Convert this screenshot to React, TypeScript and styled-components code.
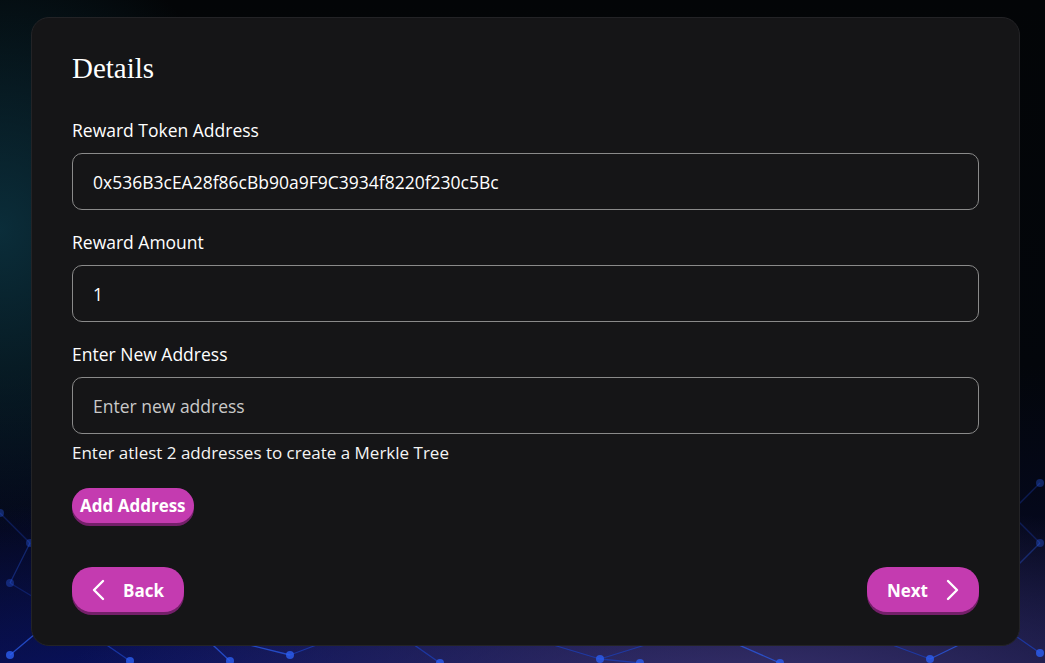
import React, { useState } from 'react';
import styled, { createGlobalStyle } from 'styled-components';

const GlobalStyle = createGlobalStyle`
  html, body {
    margin: 0;
    padding: 0;
    height: 100%;
  }
  body {
    font-family: "Open Sans", "Noto Sans", sans-serif;
    background: #020306;
    overflow: hidden;
  }
  #root {
    height: 100%;
  }
`;

const Page = styled.div`
  position: relative;
  height: 100vh;
  box-sizing: border-box;
  padding: 17px 25px 17px 31px;
  background:
    radial-gradient(ellipse 260px 300px at 0px 230px, rgba(12, 52, 66, 0.85), rgba(12, 52, 66, 0) 100%),
    radial-gradient(ellipse 700px 200px at 760px 700px, rgba(70, 60, 130, 0.8), rgba(70, 60, 130, 0) 100%),
    radial-gradient(ellipse 600px 220px at 150px 720px, rgba(10, 20, 110, 0.9), rgba(10, 20, 110, 0) 100%),
    linear-gradient(180deg, #030507 0%, #03060b 55%, #060a2a 100%);
  overflow: hidden;
`;

const Network = styled.svg`
  position: absolute;
  left: 0;
  bottom: 0;
  width: 100%;
  height: 300px;
  pointer-events: none;
`;

const Card = styled.div`
  position: relative;
  height: 100%;
  box-sizing: border-box;
  background: #151517;
  border: 1px solid #232326;
  border-radius: 18px;
  padding: 32px 40px 30px 40px;
  display: flex;
  flex-direction: column;
  color: #fff;
`;

const Title = styled.h2`
  margin: 0 0 32px 0;
  font-family: "Liberation Serif", "DejaVu Serif", serif;
  font-weight: 400;
  font-size: 29px;
  line-height: 36px;
  color: #fff;
`;

const Fields = styled.div`
  display: flex;
  flex-direction: column;
  gap: 20px;
`;

const Field = styled.div`
  display: flex;
  flex-direction: column;
`;

const Label = styled.label`
  font-size: 17.5px;
  line-height: 24px;
  margin-bottom: 11px;
  color: #fff;
`;

const Input = styled.input`
  height: 57px;
  box-sizing: border-box;
  background: transparent;
  border: 1px solid #8a8a8a;
  border-radius: 10px;
  padding: 0 20px;
  font-family: "Open Sans", "Noto Sans", sans-serif;
  font-size: 17.5px;
  color: #fff;
  outline: none;
  &::placeholder {
    color: #c9c9c9;
  }
`;

const Hint = styled.p`
  margin: 7px 0 23px 0;
  font-size: 17px;
  line-height: 24px;
  font-weight: 400;
  color: #f4f4f4;
`;

const PillButton = styled.button<{ $size?: 'small' | 'large' }>`
  display: inline-flex;
  align-items: center;
  gap: ${(p) => (p.$size === 'large' ? '18px' : '0')};
  box-sizing: border-box;
  height: ${(p) => (p.$size === 'large' ? '45px' : '35px')};
  padding: ${(p) => (p.$size === 'large' ? '1px 20px 0' : '0 8px')};
  border: none;
  border-radius: ${(p) => (p.$size === 'large' ? '20px' : '18px')};
  background: #c43bb0;
  box-shadow: 0 3px 0 #74206a;
  color: #fff;
  font-family: "Open Sans", "Noto Sans", sans-serif;
  font-weight: 700;
  font-size: 17px;
  cursor: pointer;
  align-self: flex-start;
`;

const Footer = styled.div`
  margin-top: auto;
  display: flex;
  justify-content: space-between;
  align-items: center;
  padding-bottom: 3px;
`;

const Chevron = ({ dir }: { dir: 'left' | 'right' }) => (
  <svg width="13" height="22" viewBox="0 0 13 22" fill="none">
    <polyline
      points={dir === 'left' ? '11,2 2,11 11,20' : '2,2 11,11 2,20'}
      stroke="#fff"
      strokeWidth="2.4"
      strokeLinecap="round"
      strokeLinejoin="round"
    />
  </svg>
);

// background web of nodes, bottom of the page
const nodes: [number, number][] = [
  [10, 292], [60, 250], [130, 298], [200, 270], [290, 292], [380, 258], [440, 300],
  [520, 272], [600, 296], [700, 265], [780, 300], [860, 270], [930, 296], [1000, 262],
  [1040, 290], [1000, 220], [1040, 180], [1010, 150], [1040, 120], [10, 220], [30, 180],
  [0, 150], [230, 298], [640, 300], [900, 250], [985, 240],
];
const links: [number, number][] = [
  [0, 1], [1, 2], [1, 3], [3, 4], [4, 5], [5, 6], [5, 7], [7, 8], [8, 9], [9, 10],
  [9, 11], [11, 12], [12, 13], [13, 14], [13, 15], [15, 16], [16, 17], [17, 18],
  [19, 20], [20, 21], [19, 1], [3, 22], [8, 23], [11, 24], [24, 25], [25, 13], [15, 25],
];

const App = () => {
  const [address, setAddress] = useState('');
  return (
    <>
      <GlobalStyle />
      <Page>
        <Network viewBox="0 0 1045 300" preserveAspectRatio="none">
          {links.map(([a, b], i) => (
            <line
              key={i}
              x1={nodes[a][0]}
              y1={nodes[a][1]}
              x2={nodes[b][0]}
              y2={nodes[b][1]}
              stroke={i % 3 === 0 ? '#2a5be8' : '#1c3fb8'}
              strokeWidth={1.3}
              opacity={nodes[a][1] < 240 ? 0.35 : 0.75}
            />
          ))}
          {nodes.map(([x, y], i) => (
            <circle key={i} cx={x} cy={y} r={4} fill="#2c5ef0" opacity={y < 240 ? 0.35 : 0.8} />
          ))}
        </Network>
        <Card>
          <Title>Details</Title>
          <Fields>
            <Field>
              <Label>Reward Token Address</Label>
              <Input defaultValue="0x536B3cEA28f86cBb90a9F9C3934f8220f230c5Bc" />
            </Field>
            <Field>
              <Label>Reward Amount</Label>
              <Input defaultValue="1" />
            </Field>
            <Field>
              <Label>Enter New Address</Label>
              <Input
                placeholder="Enter new address"
                value={address}
                onChange={(e) => setAddress(e.target.value)}
              />
            </Field>
          </Fields>
          <Hint>Enter atlest 2 addresses to create a Merkle Tree</Hint>
          <PillButton $size="small">Add Address</PillButton>
          <Footer>
            <PillButton $size="large">
              <Chevron dir="left" />
              Back
            </PillButton>
            <PillButton $size="large">
              Next
              <Chevron dir="right" />
            </PillButton>
          </Footer>
        </Card>
      </Page>
    </>
  );
};

export default App;
